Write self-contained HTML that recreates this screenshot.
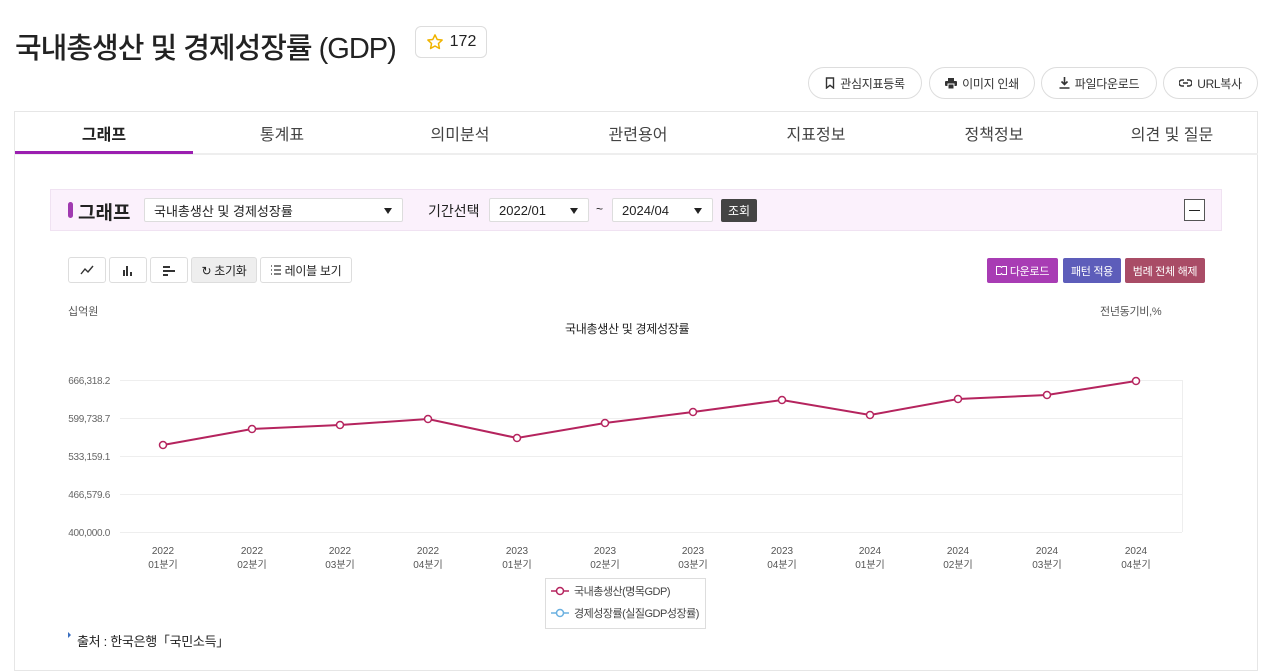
<!DOCTYPE html>
<html><head><meta charset="utf-8"><style>
*{box-sizing:border-box;margin:0;padding:0}
body{width:1280px;height:667px;overflow:hidden;background:#fff;font-family:"Liberation Sans","Noto Sans CJK KR",sans-serif;color:#222;position:relative}
.a{position:absolute}
.pill{position:absolute;top:67px;height:32px;border:1px solid #ddd;border-radius:16px;font-size:12px;display:flex;align-items:center;justify-content:center;gap:5px;color:#333;background:#fff;letter-spacing:-0.3px}
.tab{position:absolute;top:112px;height:42px;font-size:16px;display:flex;align-items:center;justify-content:center;color:#444}
.sel{position:absolute;height:24px;border:1px solid #ddd;background:#fff;font-size:13px;display:flex;align-items:center;padding-left:9px;border-radius:2px}
.sel:after{content:"";position:absolute;right:10px;top:9px;border:4px solid transparent;border-top:6px solid #222}
.tb{position:absolute;top:257px;height:26px;border:1px solid #ddd;border-radius:3px;background:#fff;font-size:12px;display:flex;align-items:center;justify-content:center;gap:4px;letter-spacing:-0.3px}
.cb{position:absolute;top:258px;height:25px;color:#fff;font-size:11px;display:flex;align-items:center;justify-content:center;gap:3px;border-radius:2px;letter-spacing:-0.3px}
.sm{font-size:11px;color:#555}
</style></head><body>
<div class="a" style="left:15px;top:25px;font-size:29px;font-weight:500;color:#222;letter-spacing:-1px">국내총생산 및 경제성장률 (GDP)</div>
<div class="a" style="left:415px;top:26px;width:72px;height:32px;border:1px solid #ddd;border-radius:6px;display:flex;align-items:center;justify-content:center;gap:6px;font-size:16px"><svg width="18" height="18" viewBox="0 0 24 24"><path d="M12 2.5l2.9 6.1 6.6.8-4.9 4.6 1.3 6.6L12 17.3l-5.9 3.3 1.3-6.6-4.9-4.6 6.6-.8z" fill="none" stroke="#f0b400" stroke-width="2" stroke-linejoin="round"/></svg>172</div>
<div class="pill" style="left:808px;width:114px"><svg width="10" height="12" viewBox="0 0 10 12"><path d="M1.5 1h7v10L5 8.3 1.5 11z" fill="none" stroke="#333" stroke-width="1.4"/></svg>관심지표등록</div>
<div class="pill" style="left:929px;width:106px"><svg width="12" height="11" viewBox="0 0 12 11"><rect x="3" y="0" width="6" height="3" fill="#333"/><rect x="0" y="3" width="12" height="5" rx="1" fill="#333"/><rect x="3" y="6" width="6" height="5" fill="#333" stroke="#fff" stroke-width="1"/></svg>이미지 인쇄</div>
<div class="pill" style="left:1041px;width:116px"><svg width="11" height="12" viewBox="0 0 11 12"><path d="M5.5 0v7M2.5 4.5l3 3 3-3M0.5 11h10" fill="none" stroke="#333" stroke-width="1.6"/></svg>파일다운로드</div>
<div class="pill" style="left:1163px;width:95px"><svg width="13" height="8" viewBox="0 0 13 8"><path d="M5 1H3a3 3 0 000 6h2M8 1h2a3 3 0 010 6H8M4 4h5" fill="none" stroke="#333" stroke-width="1.5"/></svg>URL복사</div>
<div class="a" style="left:14px;top:111px;width:1244px;height:560px;border:1px solid #e6e6e6"></div>
<div class="a" style="left:14px;top:153px;width:1244px;height:2px;background:#eee"></div>
<div class="a" style="left:15px;top:151px;width:178px;height:3px;background:#9b1fb0"></div>
<div class="tab" style="left:15px;width:178px;font-weight:700;color:#222">그래프</div>
<div class="tab" style="left:193px;width:178px">통계표</div>
<div class="tab" style="left:371px;width:178px">의미분석</div>
<div class="tab" style="left:549px;width:178px">관련용어</div>
<div class="tab" style="left:727px;width:178px">지표정보</div>
<div class="tab" style="left:905px;width:178px">정책정보</div>
<div class="tab" style="left:1083px;width:178px">의견 및 질문</div>
<div class="a" style="left:50px;top:189px;width:1172px;height:42px;background:#fbf1fc;border:1px solid #f0e2f2"></div>
<div class="a" style="left:68px;top:202px;width:5px;height:16px;border-radius:3px;background:#a03ab0"></div>
<div class="a" style="left:78px;top:198px;font-size:19px;font-weight:700">그래프</div>
<div class="sel" style="left:144px;top:198px;width:259px">국내총생산 및 경제성장률</div>
<div class="a" style="left:428px;top:201px;font-size:14px">기간선택</div>
<div class="sel" style="left:489px;top:198px;width:100px">2022/01</div>
<div class="a" style="left:596px;top:202px;font-size:12px">~</div>
<div class="sel" style="left:612px;top:198px;width:101px">2024/04</div>
<div class="a" style="left:721px;top:199px;width:36px;height:23px;background:#444;color:#fff;font-size:12px;display:flex;align-items:center;justify-content:center;border-radius:2px">조회</div>
<div class="a" style="left:1184px;top:199px;width:21px;height:22px;border:1px solid #555;background:#fff"><div style="margin:10px 4px;height:1px;background:#222"></div></div>
<div class="tb" style="left:68px;width:38px"><svg width="14" height="10" viewBox="0 0 14 10"><path d="M1 9l4-5 3 3 5-6" fill="none" stroke="#333" stroke-width="1.4"/></svg></div>
<div class="tb" style="left:109px;width:38px"><svg width="12" height="11" viewBox="0 0 12 11"><path d="M2 11V5M5 11V1M9 11V7" stroke="#333" stroke-width="2"/></svg></div>
<div class="tb" style="left:150px;width:38px"><svg width="12" height="11" viewBox="0 0 12 11"><path d="M0 2h7M0 6h12M0 10h5" stroke="#333" stroke-width="2"/></svg></div>
<div class="tb" style="left:191px;width:66px;background:#eee">↻ 초기화</div>
<div class="tb" style="left:260px;width:92px"><svg width="10" height="10" viewBox="0 0 10 10"><path d="M0 1h1M3 1h7M0 5h1M3 5h7M0 9h1M3 9h7" stroke="#333" stroke-width="1.2"/></svg>레이블 보기</div>
<div class="cb" style="left:987px;width:71px;background:#a83cb4"><svg width="11" height="9" viewBox="0 0 11 9"><path d="M0.5 0.5h4l1 1 1-1h4v8h-4l-1-1-1 1h-4z" fill="none" stroke="#fff" stroke-width="1"/></svg>다운로드</div>
<div class="cb" style="left:1063px;width:58px;background:#5d5dba">패턴 적용</div>
<div class="cb" style="left:1125px;width:80px;background:#a94c66">범례 전체 해제</div>
<div class="a sm" style="left:68px;top:303px">십억원</div>
<div class="a sm" style="left:1100px;top:303px;letter-spacing:-0.3px">전년동기비,%</div>
<div class="a" style="left:565px;top:320px;font-size:12px;color:#222;letter-spacing:-0.3px">국내총생산 및 경제성장률</div>
<svg class="a" style="left:0;top:0" width="1280" height="667">
<g stroke="#eee" stroke-width="1">
<line x1="120" y1="380.5" x2="1182" y2="380.5"/><line x1="120" y1="418.5" x2="1182" y2="418.5"/><line x1="120" y1="456.5" x2="1182" y2="456.5"/><line x1="120" y1="494.5" x2="1182" y2="494.5"/><line x1="120" y1="532.5" x2="1182" y2="532.5"/>
<line x1="1182.5" y1="380" x2="1182.5" y2="532"/>
</g>
<g font-family="Liberation Sans,Noto Sans CJK KR,sans-serif" font-size="10" fill="#666" text-anchor="end" letter-spacing="-0.3">
<text x="110" y="384">666,318.2</text><text x="110" y="422">599,738.7</text><text x="110" y="460">533,159.1</text><text x="110" y="498">466,579.6</text><text x="110" y="536">400,000.0</text>
</g>
<g font-family="Liberation Sans,Noto Sans CJK KR,sans-serif" font-size="10" fill="#555" text-anchor="middle">
<text x="163" y="554">2022</text><text x="163" y="568">01분기</text>
<text x="252" y="554">2022</text><text x="252" y="568">02분기</text>
<text x="340" y="554">2022</text><text x="340" y="568">03분기</text>
<text x="428" y="554">2022</text><text x="428" y="568">04분기</text>
<text x="517" y="554">2023</text><text x="517" y="568">01분기</text>
<text x="605" y="554">2023</text><text x="605" y="568">02분기</text>
<text x="693" y="554">2023</text><text x="693" y="568">03분기</text>
<text x="782" y="554">2023</text><text x="782" y="568">04분기</text>
<text x="870" y="554">2024</text><text x="870" y="568">01분기</text>
<text x="958" y="554">2024</text><text x="958" y="568">02분기</text>
<text x="1047" y="554">2024</text><text x="1047" y="568">03분기</text>
<text x="1136" y="554">2024</text><text x="1136" y="568">04분기</text>
</g>
<polyline fill="none" stroke="#b5245e" stroke-width="2" points="163,445 252,429 340,425 428,419 517,438 605,423 693,412 782,400 870,415 958,399 1047,395 1136,381"/>
<g fill="#fff" stroke="#b5245e" stroke-width="1.5">
<circle cx="163" cy="445" r="3.5"/><circle cx="252" cy="429" r="3.5"/><circle cx="340" cy="425" r="3.5"/><circle cx="428" cy="419" r="3.5"/><circle cx="517" cy="438" r="3.5"/><circle cx="605" cy="423" r="3.5"/><circle cx="693" cy="412" r="3.5"/><circle cx="782" cy="400" r="3.5"/><circle cx="870" cy="415" r="3.5"/><circle cx="958" cy="399" r="3.5"/><circle cx="1047" cy="395" r="3.5"/><circle cx="1136" cy="381" r="3.5"/>
</g>
<rect x="545.5" y="578.5" width="160" height="50" fill="#fff" stroke="#ddd"/>
<line x1="551" y1="591" x2="569" y2="591" stroke="#b5245e" stroke-width="1.5"/><circle cx="560" cy="591" r="3.5" fill="#fff" stroke="#b5245e" stroke-width="1.5"/>
<line x1="551" y1="613" x2="569" y2="613" stroke="#6ab0e0" stroke-width="1.5"/><circle cx="560" cy="613" r="3.5" fill="#fff" stroke="#6ab0e0" stroke-width="1.5"/>
<g font-family="Liberation Sans,Noto Sans CJK KR,sans-serif" font-size="11" fill="#444" letter-spacing="-0.5">
<text x="574" y="595">국내총생산(명목GDP)</text><text x="574" y="617">경제성장률(실질GDP성장률)</text>
</g>
<path d="M68 632 l3 3 l-3 3z" fill="#3a6fc0"/>
</svg>
<div class="a" style="left:77px;top:631px;font-size:13px;letter-spacing:-0.3px">출처 : 한국은행「국민소득」</div>
</body></html>
